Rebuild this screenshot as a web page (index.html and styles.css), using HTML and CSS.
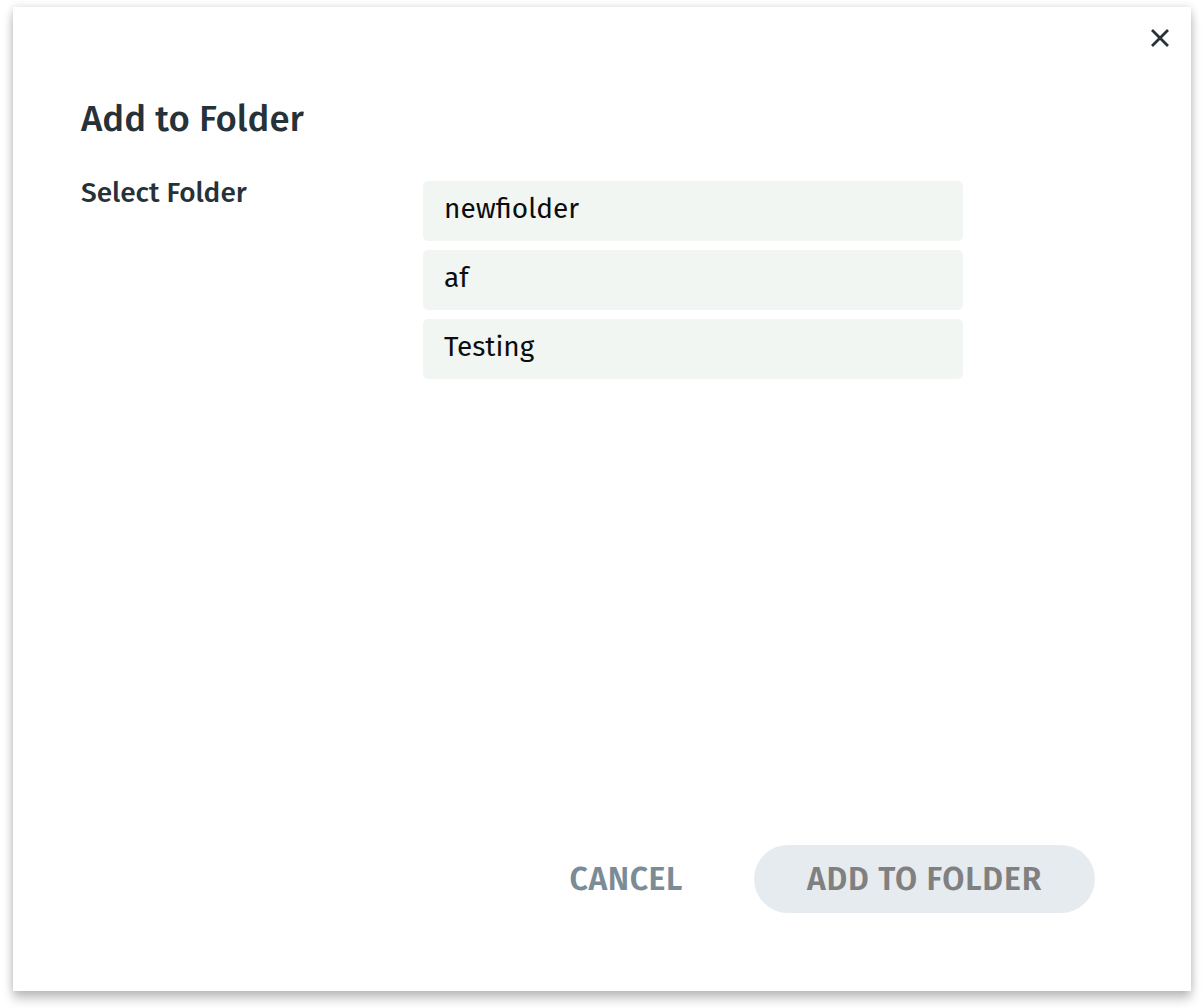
FILE: index.html
```html
<!DOCTYPE html>
<html lang="en">
<head>
<meta charset="utf-8">
<title>Add to Folder</title>
<link rel="stylesheet" href="styles.css">
</head>
<body>
<div class="dialog" role="dialog" aria-labelledby="dlg-title">
  <button class="close" aria-label="Close">
    <svg width="20" height="20" viewBox="0 0 20 20"><path d="M2 2 L18 18 M18 2 L2 18" stroke="#263238" stroke-width="2.8" stroke-linecap="butt" fill="none"/></svg>
  </button>
  <h1 class="title" id="dlg-title">Add to Folder</h1>
  <div class="field">
    <div class="label">Select Folder</div>
    <ul class="folders">
      <li class="folder">newfiolder</li>
      <li class="folder">af</li>
      <li class="folder">Testing</li>
    </ul>
  </div>
  <div class="actions">
    <button class="btn-cancel">CANCEL</button>
    <button class="btn-add">ADD TO FOLDER</button>
  </div>
</div>
</body>
</html>
```

FILE: styles.css
```css
html, body {
  margin: 0;
  padding: 0;
  background: #ffffff;
}
body {
  font-family: "Fira Sans", "Open Sans", "Noto Sans", sans-serif;
  padding: 7px 12px 17px 13px;
  box-sizing: border-box;
  height: 1008px;
}
.dialog {
  position: relative;
  box-sizing: border-box;
  width: 1178px;
  height: 984px;
  background: #ffffff;
  box-shadow: 0 8px 10px rgba(0, 0, 0, 0.22), 0 0 8px rgba(0, 0, 0, 0.14);
  padding: 90px 96px 78px 68px;
  display: flex;
  flex-direction: column;
}
.close {
  position: absolute;
  top: 21px;
  right: 21px;
  width: 20px;
  height: 20px;
  padding: 0;
  border: 0;
  background: none;
  cursor: pointer;
}
.close svg { display: block; }
.title {
  margin: 0;
  font-size: 36.6px;
  line-height: 44px;
  font-weight: 500;
  color: #263238;
}
.field {
  display: flex;
  margin-top: 34px;
}
.label {
  width: 342px;
  flex: none;
  font-size: 28px;
  line-height: 36px;
  font-weight: 500;
  color: #263238;
}
.folders {
  list-style: none;
  margin: 6px 0 0 0;
  padding: 0;
  width: 540px;
  display: flex;
  flex-direction: column;
  gap: 9px;
}
.folder {
  box-sizing: border-box;
  height: 60px;
  padding: 10px 21px 14px;
  font-size: 28px;
  line-height: 36px;
  color: #0d0d0d;
  background: #f1f6f2;
  border-radius: 5px;
}
.actions {
  margin-top: auto;
  display: flex;
  justify-content: flex-end;
  align-items: center;
  gap: 71px;
}
.btn-cancel {
  font-family: inherit;
  font-size: 32px;
  font-weight: 600;
  color: #7b8c97;
  background: none;
  border: 0;
  padding: 0;
  letter-spacing: 0.6px;
}
.btn-add {
  font-family: inherit;
  width: 341px;
  height: 68px;
  border-radius: 34px;
  border: 0;
  background: #e6ebef;
  color: #808080;
  font-size: 32px;
  font-weight: 600;
  letter-spacing: 0.8px;
  padding: 0;
}
```
